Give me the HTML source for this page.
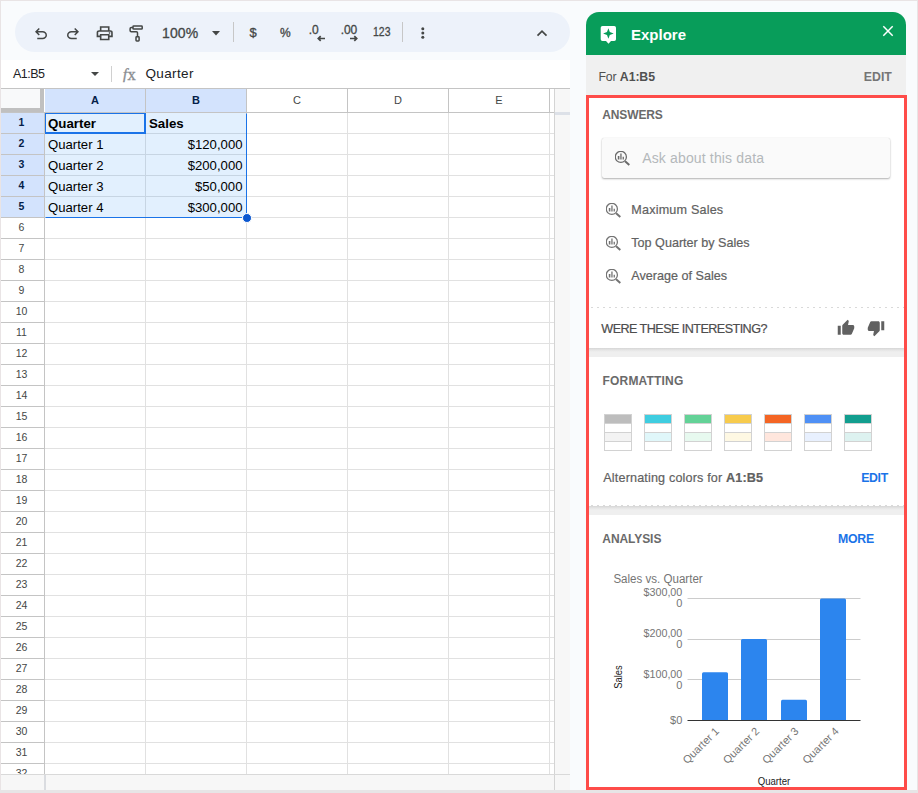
<!DOCTYPE html>
<html lang="en"><head><meta charset="utf-8"><title>Explore</title>
<style>
*{box-sizing:border-box;margin:0;padding:0}
html,body{width:918px;height:793px;overflow:hidden;background:#f9fbfd;font-family:"Liberation Sans",Arial,sans-serif;color:#202124}
#root{position:relative;width:918px;height:793px;overflow:hidden;background:#f9fbfd}
#root div,#root svg,#root .t{position:absolute}
.t{white-space:nowrap;line-height:1}
.t b{font-weight:bold}
.edgeL{left:0;top:0;width:1px;height:793px;background:#e9e4e5}
.edgeT{left:0;top:0;width:918px;height:1px;background:#e9e4e5}
.edgeB{left:0;top:790px;width:918px;height:3px;background:#e7e5e6}
.pill{left:15px;top:12px;width:555px;height:40px;border-radius:20px;background:#edf2fa}
.sep{width:1px;background:#c7c7c7}
.fbar{left:1px;top:60px;width:569px;height:28px;background:#fff}
.grid{left:1px;top:88px;width:569px;height:702px;background:#fff}
.hl{left:45px;width:509px;height:1px;background:#e1e1e1}
.vl{top:113px;width:1px;height:661px;background:#e1e1e1}
.rh{left:1px;width:43px;height:21px;font-size:10.5px;line-height:19px;padding-right:2px;text-align:center;color:#444746;background:#fff;border-bottom:1px solid #c4c4c4}
.rh.sel{background:#d3e3fd;color:#041e49;font-weight:bold}
.ch{top:89px;width:101px;height:23px;font-size:11px;line-height:23px;text-align:center;color:#444746;background:#fff;border-right:1px solid #c4c4c4}
.ch.sel{background:#d3e3fd;color:#041e49;font-weight:bold}
.cell{height:20px;width:100px;font-size:13.15px;line-height:21px;color:#000;white-space:nowrap;padding:0 3px 0 3px}
.ca{left:45px}
.cb{left:146px}
.cell.r{text-align:right;padding-right:3.5px}
.cell.b{font-weight:bold;font-size:13.3px}
.sw{top:414px;width:28px;height:37px;border:1px solid #d2d2d2;background:#fff}
.sw i{display:block;width:26px;height:9px;border-bottom:1px solid #d2d2d2}
.sw i:first-child{height:9px}
.sw i:last-child{border-bottom:0;height:8px}
.card{left:589px;width:315px;background:#fff}
</style></head><body>
<div id="root">

<!-- toolbar -->
<div class="pill"></div>
<svg class="ic" style="left:32px;top:25px" width="18" height="18" viewBox="0 0 24 24"><path fill="#444746" d="M7 19v-2h7.1q1.575 0 2.738-1T18 13.500 16.838 11 14.100 10H7.8l2.600 2.600L9 14 4 9l5-5 1.400 1.400L7.800 8h6.300q2.425 0 4.163 1.575T20 13.500t-1.737 3.925T14.100 19z"/></svg>
<svg class="ic" style="left:64px;top:25px" width="18" height="18" viewBox="0 0 24 24"><path fill="#444746" d="M9.900 19q-2.425 0-4.163-1.575T4 13.500t1.737-3.925T9.900 8h6.300l-2.600-2.600L15 4l5 5-5 5-1.400-1.400 2.600-2.600H9.900q-1.575 0-2.738 1T6 13.500 7.162 16 9.900 17H17v2z"/></svg>
<svg class="ic" style="left:95.400px;top:23.600px" width="19.400" height="18.600" viewBox="0 0 24 24" preserveAspectRatio="none"><path fill="#444746" d="M16 8V5H8v3H6V3h12v5zm2 4.500q.425 0 .713-.288T19 11.500t-.288-.713T18 10.500t-.713.288T17 11.500t.288.713.712.287M16 19v-4H8v4zm2 2H6v-4H2v-6q0-1.275.875-2.137T5 8h14q1.275 0 2.138.863T22 11v6h-4zm2-6v-4q0-.425-.288-.712T19 10H5q-.425 0-.712.288T4 11v4h2v-2h12v2z"/></svg>
<svg class="ic" style="left:127px;top:23px" width="20" height="21" viewBox="127 23 20 21"><g fill="none" stroke="#444746" stroke-width="1.500"><rect x="133" y="26" width="9.200" height="3.100" rx=".700"/><path d="M133 27.600H131.300Q130.100 27.600 130.100 28.800V30.500Q130.100 31.700 131.300 31.700H136.400Q137.500 31.700 137.500 32.800V36.500"/><rect x="136" y="36.800" width="3.100" height="4.200" rx=".700"/></g></svg>
<svg class="ic" style="left:212px;top:31px" width="8" height="5" viewBox="0 0 8 5"><path fill="#444746" d="M0 0h8L4 4.500z"/></svg>
<div class="sep" style="left:233px;top:22px;height:20px"></div>
<svg class="ic" style="left:317px;top:35px" width="9" height="7" viewBox="0 0 9 7"><path d="M8 3.500H1.400M3.700 1.200L1.300 3.500 3.700 5.800" fill="none" stroke="#444746" stroke-width="1.700"/></svg>
<svg class="ic" style="left:349px;top:35px" width="9" height="7" viewBox="0 0 9 7"><path d="M1 3.500H7.600M5.300 1.200L7.700 3.500 5.300 5.800" fill="none" stroke="#444746" stroke-width="1.700"/></svg>
<div class="sep" style="left:402px;top:22px;height:20px"></div>
<svg class="ic" style="left:420px;top:26px" width="6" height="14" viewBox="0 0 6 14"><circle cx="2.800" cy="2.800" r="1.500" fill="#444746"/><circle cx="2.800" cy="7" r="1.500" fill="#444746"/><circle cx="2.800" cy="11.200" r="1.500" fill="#444746"/></svg>
<svg class="ic" style="left:535px;top:28px" width="14" height="10" viewBox="0 0 14 10"><path d="M2.500 7.700L7 3.200l4.500 4.500" fill="none" stroke="#444746" stroke-width="1.700"/></svg>

<!-- formula bar -->
<div class="fbar"></div>
<svg class="ic" style="left:91px;top:72px" width="8" height="4" viewBox="0 0 8 4"><path fill="#444746" d="M0 0h8L4 4z"/></svg>
<div class="sep" style="left:111px;top:66px;height:16px;background:#d0d0d0"></div>
<span class="t" style="left:123px;top:67px;font-family:'Liberation Serif',serif;font-size:16.500px;color:#8a8d91;-webkit-text-stroke:.35px #8a8d91"><i style="font-style:italic;font-size:15px;position:relative;top:-1.200px;margin-right:.4px">f</i>x</span>

<!-- sheet grid -->
<div class="grid"></div>
<div style="left:1px;top:88px;width:569px;height:1px;background:#c4c4c4"></div>
<div style="left:1px;top:89px;width:43px;height:23px;background:#f8f9fa;border-right:4px solid #c0c0c0;border-bottom:4px solid #c0c0c0"></div>
<div class="ch sel" style="left:45px">A</div>
<div class="ch sel" style="left:146px">B</div>
<div class="ch" style="left:247px">C</div>
<div class="ch" style="left:348px">D</div>
<div class="ch" style="left:449px">E</div>
<div style="left:1px;top:112px;width:553px;height:1px;background:#c4c4c4"></div>
<div style="left:44px;top:113px;width:1px;height:661px;background:#c4c4c4"></div>
<div class="rh sel" style="top:113px">1</div>
<div class="rh sel" style="top:134px">2</div>
<div class="rh sel" style="top:155px">3</div>
<div class="rh sel" style="top:176px">4</div>
<div class="rh sel" style="top:197px">5</div>
<div class="rh" style="top:218px">6</div>
<div class="rh" style="top:239px">7</div>
<div class="rh" style="top:260px">8</div>
<div class="rh" style="top:281px">9</div>
<div class="rh" style="top:302px">10</div>
<div class="rh" style="top:323px">11</div>
<div class="rh" style="top:344px">12</div>
<div class="rh" style="top:365px">13</div>
<div class="rh" style="top:386px">14</div>
<div class="rh" style="top:407px">15</div>
<div class="rh" style="top:428px">16</div>
<div class="rh" style="top:449px">17</div>
<div class="rh" style="top:470px">18</div>
<div class="rh" style="top:491px">19</div>
<div class="rh" style="top:512px">20</div>
<div class="rh" style="top:533px">21</div>
<div class="rh" style="top:554px">22</div>
<div class="rh" style="top:575px">23</div>
<div class="rh" style="top:596px">24</div>
<div class="rh" style="top:617px">25</div>
<div class="rh" style="top:638px">26</div>
<div class="rh" style="top:659px">27</div>
<div class="rh" style="top:680px">28</div>
<div class="rh" style="top:701px">29</div>
<div class="rh" style="top:722px">30</div>
<div class="rh" style="top:743px">31</div>
<div class="rh" style="top:764px">32</div>
<div class="hl" style="top:133px"></div>
<div class="hl" style="top:154px"></div>
<div class="hl" style="top:175px"></div>
<div class="hl" style="top:196px"></div>
<div class="hl" style="top:217px"></div>
<div class="hl" style="top:238px"></div>
<div class="hl" style="top:259px"></div>
<div class="hl" style="top:280px"></div>
<div class="hl" style="top:301px"></div>
<div class="hl" style="top:322px"></div>
<div class="hl" style="top:343px"></div>
<div class="hl" style="top:364px"></div>
<div class="hl" style="top:385px"></div>
<div class="hl" style="top:406px"></div>
<div class="hl" style="top:427px"></div>
<div class="hl" style="top:448px"></div>
<div class="hl" style="top:469px"></div>
<div class="hl" style="top:490px"></div>
<div class="hl" style="top:511px"></div>
<div class="hl" style="top:532px"></div>
<div class="hl" style="top:553px"></div>
<div class="hl" style="top:574px"></div>
<div class="hl" style="top:595px"></div>
<div class="hl" style="top:616px"></div>
<div class="hl" style="top:637px"></div>
<div class="hl" style="top:658px"></div>
<div class="hl" style="top:679px"></div>
<div class="hl" style="top:700px"></div>
<div class="hl" style="top:721px"></div>
<div class="hl" style="top:742px"></div>
<div class="hl" style="top:763px"></div>
<div class="hl" style="top:784px"></div>
<div class="vl" style="left:145px"></div>
<div class="vl" style="left:246px"></div>
<div class="vl" style="left:347px"></div>
<div class="vl" style="left:448px"></div>
<div class="vl" style="left:549px"></div>
<!-- selection -->
<div style="left:45px;top:113px;width:201px;height:104px;background:rgba(3,124,246,.115)"></div>
<div class="cell ca b" style="top:113px">Quarter</div>
<div class="cell cb b" style="top:113px">Sales</div>
<div class="cell ca" style="top:134px">Quarter 1</div>
<div class="cell cb r" style="top:134px">$120,000</div>
<div class="cell ca" style="top:155px">Quarter 2</div>
<div class="cell cb r" style="top:155px">$200,000</div>
<div class="cell ca" style="top:176px">Quarter 3</div>
<div class="cell cb r" style="top:176px">$50,000</div>
<div class="cell ca" style="top:197px">Quarter 4</div>
<div class="cell cb r" style="top:197px">$300,000</div>
<div style="left:45px;top:113px;width:202px;height:105px;border:1px solid #1a73e8;border-top-color:transparent;border-left-color:transparent"></div>
<div style="left:45px;top:113px;width:101px;height:21px;border:solid #1a73e8;border-width:1px 2px 2px 1px"></div>
<div style="left:242px;top:213px;width:10px;height:10px;border-radius:50%;background:#0b57d0;border:1px solid #fff"></div>
<!-- scrollbars -->
<div style="left:554px;top:89px;width:16px;height:685px;background:#f7f7f7;border-left:1px solid #d4d4d4"></div>
<div style="left:555px;top:112px;width:15px;height:3px;background:#dde1e8"></div>
<div style="left:1px;top:774px;width:569px;height:16px;background:#f7f7f7;border-top:1px solid #d9d9d9"></div>
<div style="left:44px;top:775px;width:2px;height:15px;background:#dadce0"></div>
<div style="left:554px;top:775px;width:1px;height:15px;background:#d4d4d4"></div>

<!-- explore panel -->
<div style="left:586px;top:12px;width:320px;height:43px;background:#089d5a;border-radius:13px 13px 0 0"></div>
<svg class="ic" style="left:600px;top:25px" width="17" height="20" viewBox="0 0 17 20"><path fill="#fff" d="M2.500 1h11.700a1.800 1.800 0 0 1 1.800 1.800v11.400a1.800 1.800 0 0 1-1.800 1.800H11l-2.500 2.800L6 16H2.500A1.800 1.800 0 0 1 .7 14.200V2.800A1.800 1.800 0 0 1 2.500 1z"/><path fill="#089d5a" d="M8.400 3.200l1.400 3.900 3.900 1.400-3.900 1.400-1.400 3.900L7 9.900 3.100 8.500 7 7.100z"/></svg>
<svg class="ic" style="left:882px;top:25px" width="12" height="12" viewBox="0 0 12 12"><path d="M1.300 1.300l9.400 9.400M10.700 1.300l-9.400 9.400" stroke="#fff" stroke-width="1.500" fill="none"/></svg>
<div style="left:586px;top:55px;width:320px;height:40px;background:#f0f0f0"></div>
<div style="left:586px;top:95px;width:321px;height:695px;background:#efefef;border:3px solid #fe4c49"></div>
<!-- answers card -->
<div class="card" style="top:98px;height:250px"></div>
<div style="left:602px;top:138px;width:288px;height:40px;background:#fafafa;border-radius:2px;box-shadow:0 1px 2px rgba(0,0,0,.3),0 0 1px rgba(0,0,0,.15)"></div>
<svg class="ic" style="left:615.4px;top:151.2px" width="16" height="16" viewBox="0 0 16 16"><circle cx="5.850" cy="5.900" r="5.550" fill="none" stroke="#6a6a6a" stroke-width="1.250"/><path d="M10.100 10.300L14.300 13.900" stroke="#6a6a6a" stroke-width="2" fill="none"/><path fill="#6a6a6a" d="M2.800 5h1.600v3.400H2.800zM5.300 2.400h1.300v6H5.300zM7.600 5.800h1.300v2.600H7.600z"/></svg>
<svg class="ic" style="left:606.4px;top:203.2px" width="16" height="16" viewBox="0 0 16 16"><circle cx="5.850" cy="5.900" r="5.550" fill="none" stroke="#737373" stroke-width="1.250"/><path d="M10.100 10.300L14.300 13.900" stroke="#737373" stroke-width="2" fill="none"/><path fill="#737373" d="M2.800 5h1.600v3.400H2.800zM5.300 2.400h1.300v6H5.300zM7.600 5.800h1.300v2.600H7.600z"/></svg>
<svg class="ic" style="left:606.4px;top:236.1px" width="16" height="16" viewBox="0 0 16 16"><circle cx="5.850" cy="5.900" r="5.550" fill="none" stroke="#737373" stroke-width="1.250"/><path d="M10.100 10.300L14.300 13.900" stroke="#737373" stroke-width="2" fill="none"/><path fill="#737373" d="M2.800 5h1.600v3.400H2.800zM5.300 2.400h1.300v6H5.300zM7.600 5.800h1.300v2.600H7.600z"/></svg>
<svg class="ic" style="left:606.4px;top:269px" width="16" height="16" viewBox="0 0 16 16"><circle cx="5.850" cy="5.900" r="5.550" fill="none" stroke="#737373" stroke-width="1.250"/><path d="M10.100 10.300L14.300 13.900" stroke="#737373" stroke-width="2" fill="none"/><path fill="#737373" d="M2.800 5h1.600v3.400H2.800zM5.300 2.400h1.300v6H5.300zM7.600 5.800h1.300v2.600H7.600z"/></svg>
<div style="left:589px;top:307px;width:315px;height:1px;background:repeating-linear-gradient(90deg,transparent 0 2px,#d9d9d9 2px 4px,transparent 4px 6px)"></div>
<svg class="ic" style="left:837px;top:319px" width="18" height="18" viewBox="0 0 24 24"><path fill="#616161" d="M1 21h4V9H1v12zm22-11c0-1.100-.9-2-2-2h-6.310l.95-4.570.03-.32c0-.41-.17-.79-.44-1.060L14.170 1 7.590 7.590C7.220 7.950 7 8.450 7 9v10c0 1.100.9 2 2 2h9c.83 0 1.540-.5 1.840-1.220l3.020-7.050c.09-.23.140-.47.140-.73v-2z"/></svg>
<svg class="ic" style="left:867px;top:319px" width="18" height="18" viewBox="0 0 24 24"><path fill="#616161" d="M15 3H6c-.83 0-1.540.5-1.840 1.220l-3.020 7.050c-.09.230-.14.470-.14.730v2c0 1.100.9 2 2 2h6.310l-.95 4.570-.03.320c0 .41.170.79.440 1.060L9.830 23l6.590-6.590c.36-.36.580-.86.580-1.410V5c0-1.100-.9-2-2-2zm4 0v12h4V3h-4z"/></svg>
<div style="left:589px;top:348px;width:315px;height:4px;background:linear-gradient(#d6d6d6,#e6e6e6 55%,#efefef)"></div>
<!-- formatting card -->
<div class="card" style="top:357px;height:149px"></div>
<div class="sw" style="left:604px"><i style="background:#bdbdbd"></i><i></i><i style="background:#f3f3f3"></i><i></i></div>
<div class="sw" style="left:644px"><i style="background:#3fcde0"></i><i></i><i style="background:#e0f7fa"></i><i></i></div>
<div class="sw" style="left:684px"><i style="background:#63d297"></i><i></i><i style="background:#e7f9ef"></i><i></i></div>
<div class="sw" style="left:724px"><i style="background:#f7cb4d"></i><i></i><i style="background:#fef8e3"></i><i></i></div>
<div class="sw" style="left:764px"><i style="background:#f46524"></i><i></i><i style="background:#ffe6dd"></i><i></i></div>
<div class="sw" style="left:804px"><i style="background:#4f90f5"></i><i></i><i style="background:#e8f0fe"></i><i></i></div>
<div class="sw" style="left:844px"><i style="background:#129e8f"></i><i></i><i style="background:#ddf2f0"></i><i></i></div>
<div style="left:589px;top:505px;width:315px;height:1px;background:repeating-linear-gradient(90deg,#fff 0 2px,#d9d9d9 2px 4px,#fff 4px 6px)"></div>
<div style="left:589px;top:506px;width:315px;height:4px;background:linear-gradient(#d6d6d6,#e6e6e6 55%,#efefef)"></div>
<!-- analysis card -->
<div class="card" style="top:515px;height:272px"></div>
<svg class="ic" style="left:596px;top:560px" width="300" height="227" viewBox="596 560 300 227" font-family='"Liberation Sans",Arial,sans-serif'>
<g stroke="#cccccc" stroke-width="1"><path d="M687.500 598.500H860.500M687.500 639.500H860.500M687.500 679.500H860.500"/></g>
<g fill="#2c85ee"><path d="M702 720V673.700q0-1.500 1.500-1.500h23q1.500 0 1.500 1.500V720z"/><path d="M741 720V640.500q0-1.500 1.500-1.500h23q1.500 0 1.500 1.500V720z"/><path d="M781 720V701.300q0-1.500 1.500-1.500h23q1.500 0 1.500 1.500V720z"/><path d="M820 720V600q0-1.500 1.500-1.500h23q1.500 0 1.500 1.500V720z"/></g>
<path d="M687.500 720.500H860.500" stroke="#333" stroke-width="1"/>
<text x="613.400" y="582.600" font-size="12" fill="#757575" textLength="89.300" lengthAdjust="spacingAndGlyphs">Sales vs. Quarter</text>
<g font-size="11" fill="#757575" text-anchor="end">
<text x="682.300" y="596.400" textLength="38.800" lengthAdjust="spacingAndGlyphs">$300,00</text><text x="682.300" y="606.900">0</text>
<text x="682.300" y="637" textLength="38.800" lengthAdjust="spacingAndGlyphs">$200,00</text><text x="682.300" y="647.800">0</text>
<text x="682.300" y="678" textLength="38.800" lengthAdjust="spacingAndGlyphs">$100,00</text><text x="682.300" y="688.700">0</text>
<text x="682.300" y="724">$0</text>
</g>
<g font-size="11" fill="#757575" text-anchor="end">
<text transform="translate(719.700 732) rotate(-45)" textLength="46" lengthAdjust="spacingAndGlyphs">Quarter 1</text>
<text transform="translate(760 732) rotate(-45)" textLength="46" lengthAdjust="spacingAndGlyphs">Quarter 2</text>
<text transform="translate(799.400 732) rotate(-45)" textLength="46" lengthAdjust="spacingAndGlyphs">Quarter 3</text>
<text transform="translate(839.600 732) rotate(-45)" textLength="46" lengthAdjust="spacingAndGlyphs">Quarter 4</text>
</g>
<text x="774" y="785" font-size="10.500" fill="#222" text-anchor="middle" textLength="32.600" lengthAdjust="spacingAndGlyphs">Quarter</text>
<text transform="translate(622 677) rotate(-90)" font-size="10.500" fill="#222" text-anchor="middle" textLength="23.500" lengthAdjust="spacingAndGlyphs">Sales</text>
</svg>

<!-- text labels -->
<span class="t" style="left:162.0px;top:26.0px;font-size:14px;color:#444746;letter-spacing:0.12px;-webkit-text-stroke:.3px;">100%</span>
<span class="t" style="left:249.5px;top:26.0px;font-size:13px;color:#444746;-webkit-text-stroke:.3px;">$</span>
<span class="t" style="left:280.0px;top:27.0px;font-size:12px;color:#444746;letter-spacing:-0.37px;-webkit-text-stroke:.3px;">%</span>
<span class="t" style="left:308.7px;top:24.0px;font-size:12px;color:#444746;letter-spacing:-0.11px;-webkit-text-stroke:.3px;">.0</span>
<span class="t" style="left:340.8px;top:24.0px;font-size:12px;color:#444746;letter-spacing:-0.10px;-webkit-text-stroke:.3px;">.00</span>
<span class="t" style="left:373.3px;top:25.0px;font-size:13px;color:#444746;transform:scaleX(0.806);transform-origin:0 0;-webkit-text-stroke:.3px;">123</span>
<span class="t" style="left:13.0px;top:68.0px;font-size:12.5px;color:#202124;letter-spacing:-0.51px;">A1:B5</span>
<span class="t" style="left:145.5px;top:67.0px;font-size:13.5px;color:#202124;letter-spacing:0.36px;">Quarter</span>
<span class="t" style="left:631.0px;top:27.0px;font-size:15px;color:#ffffff;font-weight:bold;">Explore</span>
<span class="t" style="left:598.4px;top:71.0px;font-size:12.3px;color:#505050;letter-spacing:-0.10px;">For <b>A1:B5</b></span>
<span class="t" style="left:863.8px;top:71.0px;font-size:12.3px;color:#757575;font-weight:bold;">EDIT</span>
<span class="t" style="left:602.3px;top:109.0px;font-size:12px;color:#6a6a6a;letter-spacing:-0.13px;font-weight:bold;">ANSWERS</span>
<span class="t" style="left:642.2px;top:151.0px;font-size:14px;color:#b4b8bb;letter-spacing:0.15px;">Ask about this data</span>
<span class="t" style="left:631.3px;top:204.0px;font-size:12.6px;color:#616161;letter-spacing:0.19px;-webkit-text-stroke:.2px;">Maximum Sales</span>
<span class="t" style="left:631.3px;top:237.0px;font-size:12.6px;color:#616161;-webkit-text-stroke:.2px;">Top Quarter by Sales</span>
<span class="t" style="left:631.3px;top:270.0px;font-size:12.6px;color:#616161;-webkit-text-stroke:.2px;">Average of Sales</span>
<span class="t" style="left:601.3px;top:323.0px;font-size:12.6px;color:#4d4d4d;letter-spacing:-0.55px;-webkit-text-stroke:.2px;">WERE THESE INTERESTING?</span>
<span class="t" style="left:602.6px;top:375.0px;font-size:12px;color:#6a6a6a;letter-spacing:0.17px;font-weight:bold;">FORMATTING</span>
<span class="t" style="left:603.3px;top:472.0px;font-size:12.6px;color:#616161;letter-spacing:0.16px;-webkit-text-stroke:.2px;">Alternating colors for <b>A1:B5</b></span>
<span class="t" style="left:861.3px;top:472.0px;font-size:12.3px;color:#1a73e8;letter-spacing:-0.38px;font-weight:bold;">EDIT</span>
<span class="t" style="left:602.3px;top:533.0px;font-size:12px;color:#6a6a6a;letter-spacing:-0.07px;font-weight:bold;">ANALYSIS</span>
<span class="t" style="left:838.0px;top:533.0px;font-size:12.3px;color:#1a73e8;letter-spacing:-0.23px;font-weight:bold;">MORE</span>

<div class="edgeL"></div><div class="edgeL" style="left:917px"></div><div class="edgeT"></div><div class="edgeB"></div>
</div>
</body></html>
